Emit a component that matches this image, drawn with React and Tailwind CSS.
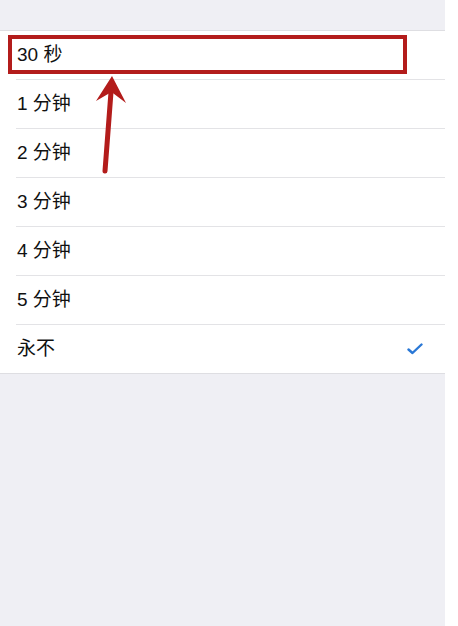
export default function App() {
  const rows = ["30 秒", "1 分钟", "2 分钟", "3 分钟", "4 分钟", "5 分钟", "永不"];
  return (
    <div
      className="relative flex w-[458px] h-[626px] bg-white overflow-hidden"
      style={{ fontFamily: '"Liberation Sans", "Noto Sans CJK SC", sans-serif' }}
    >
      <div className="w-[445px] h-full bg-[#efeff4] flex flex-col">
        <div className="h-[30px]" />
        <div className="bg-white border-y border-[#dedee2]">
          {rows.map((r, i) => (
            <div key={r} className="pl-[16px]">
              <div
                className={
                  i < rows.length - 1
                    ? "h-[49px] flex items-center justify-between pr-[22px] border-b border-[#e3e3e6]"
                    : "h-[48px] flex items-center justify-between pr-[22px]"
                }
              >
                <span className="text-[19px] text-[#111] pl-[1px]">{r}</span>
                {i === rows.length - 1 && (
                  <svg width="16" height="12" viewBox="0 0 16 12">
                    <path d="M1.5 6.5 L5.5 10 L14.5 1.5" fill="none" stroke="#2a78d6" strokeWidth="2.4" strokeLinecap="round" strokeLinejoin="round" />
                  </svg>
                )}
              </div>
            </div>
          ))}
        </div>
      </div>
      <div className="absolute left-[8px] top-[35px] w-[399px] h-[39px] border-[4px] border-[#b31c1b]" />
      <svg className="absolute left-0 top-0" width="458" height="200" viewBox="0 0 458 200">
        <line x1="111" y1="92" x2="105" y2="171" stroke="#b31c1b" strokeWidth="5" strokeLinecap="round" />
        <polygon points="112,76 96,101 111.5,92 126,103" fill="#b31c1b" />
      </svg>
    </div>
  );
}
